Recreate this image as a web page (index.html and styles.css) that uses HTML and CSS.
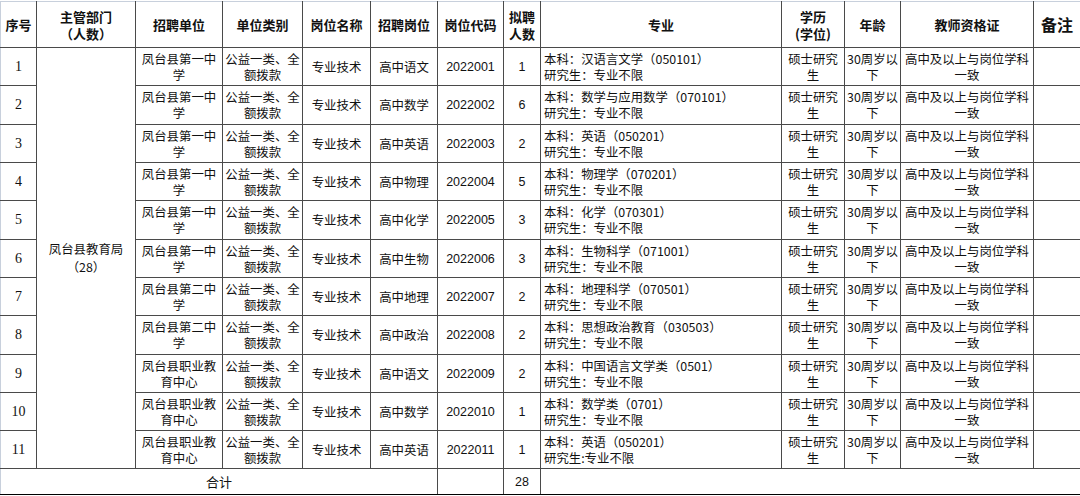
FILE: index.html
```html
<!DOCTYPE html>
<html lang="zh">
<head>
<meta charset="utf-8">
<link rel="stylesheet" href="styles.css">
</head>
<body>
<table class="grid">
  <colgroup>
    <col class="c-no"><col class="c-dept"><col class="c-unit"><col class="c-type"><col class="c-pos"><col class="c-job"><col class="c-code"><col class="c-num"><col class="c-major"><col class="c-edu"><col class="c-age"><col class="c-cert"><col class="c-note">
  </colgroup>
  <thead>
    <tr class="head">
      <th class="first">序号</th>
      <th>主管部门<br>（人数）</th>
      <th>招聘单位</th>
      <th>单位类别</th>
      <th>岗位名称</th>
      <th>招聘岗位</th>
      <th>岗位代码</th>
      <th>拟聘<br>人数</th>
      <th>专业</th>
      <th>学历<br>(学位)</th>
      <th>年龄</th>
      <th>教师资格证</th>
      <th class="last note">备注</th>
    </tr>
  </thead>
  <tbody>
    <tr class="r38">
      <td class="first no">1</td>
      <td class="dept" rowspan="11">凤台县教育局<br>（28）</td>
      <td>凤台县第一中学</td><td>公益一类、全额拨款</td><td>专业技术</td><td>高中语文</td><td class="code">2022001</td><td class="code">1</td>
      <td class="major">本科：汉语言文学（050101）<br>研究生：专业不限</td>
      <td>硕士研究生</td><td>30周岁以下</td><td>高中及以上与岗位学科一致</td><td class="last"></td>
    </tr>
    <tr class="r39">
      <td class="first no">2</td>
      <td>凤台县第一中学</td><td>公益一类、全额拨款</td><td>专业技术</td><td>高中数学</td><td class="code">2022002</td><td class="code">6</td>
      <td class="major">本科：数学与应用数学（070101）<br>研究生：专业不限</td>
      <td>硕士研究生</td><td>30周岁以下</td><td>高中及以上与岗位学科一致</td><td class="last"></td>
    </tr>
    <tr class="r38">
      <td class="first no">3</td>
      <td>凤台县第一中学</td><td>公益一类、全额拨款</td><td>专业技术</td><td>高中英语</td><td class="code">2022003</td><td class="code">2</td>
      <td class="major">本科：英语（050201）<br>研究生：专业不限</td>
      <td>硕士研究生</td><td>30周岁以下</td><td>高中及以上与岗位学科一致</td><td class="last"></td>
    </tr>
    <tr class="r38">
      <td class="first no">4</td>
      <td>凤台县第一中学</td><td>公益一类、全额拨款</td><td>专业技术</td><td>高中物理</td><td class="code">2022004</td><td class="code">5</td>
      <td class="major">本科：物理学（070201）<br>研究生：专业不限</td>
      <td>硕士研究生</td><td>30周岁以下</td><td>高中及以上与岗位学科一致</td><td class="last"></td>
    </tr>
    <tr class="r39">
      <td class="first no">5</td>
      <td>凤台县第一中学</td><td>公益一类、全额拨款</td><td>专业技术</td><td>高中化学</td><td class="code">2022005</td><td class="code">3</td>
      <td class="major">本科：化学（070301）<br>研究生：专业不限</td>
      <td>硕士研究生</td><td>30周岁以下</td><td>高中及以上与岗位学科一致</td><td class="last"></td>
    </tr>
    <tr class="r38">
      <td class="first no">6</td>
      <td>凤台县第一中学</td><td>公益一类、全额拨款</td><td>专业技术</td><td>高中生物</td><td class="code">2022006</td><td class="code">3</td>
      <td class="major">本科：生物科学（071001）<br>研究生：专业不限</td>
      <td>硕士研究生</td><td>30周岁以下</td><td>高中及以上与岗位学科一致</td><td class="last"></td>
    </tr>
    <tr class="r38">
      <td class="first no">7</td>
      <td>凤台县第二中学</td><td>公益一类、全额拨款</td><td>专业技术</td><td>高中地理</td><td class="code">2022007</td><td class="code">2</td>
      <td class="major">本科：地理科学（070501）<br>研究生：专业不限</td>
      <td>硕士研究生</td><td>30周岁以下</td><td>高中及以上与岗位学科一致</td><td class="last"></td>
    </tr>
    <tr class="r39">
      <td class="first no">8</td>
      <td>凤台县第二中学</td><td>公益一类、全额拨款</td><td>专业技术</td><td>高中政治</td><td class="code">2022008</td><td class="code">2</td>
      <td class="major">本科：思想政治教育（030503）<br>研究生：专业不限</td>
      <td>硕士研究生</td><td>30周岁以下</td><td>高中及以上与岗位学科一致</td><td class="last"></td>
    </tr>
    <tr class="r38">
      <td class="first no">9</td>
      <td>凤台县职业教育中心</td><td>公益一类、全额拨款</td><td>专业技术</td><td>高中语文</td><td class="code">2022009</td><td class="code">2</td>
      <td class="major">本科：中国语言文学类（0501）<br>研究生：专业不限</td>
      <td>硕士研究生</td><td>30周岁以下</td><td>高中及以上与岗位学科一致</td><td class="last"></td>
    </tr>
    <tr class="r38">
      <td class="first no">10</td>
      <td>凤台县职业教育中心</td><td>公益一类、全额拨款</td><td>专业技术</td><td>高中数学</td><td class="code">2022010</td><td class="code">1</td>
      <td class="major">本科：数学类（0701）<br>研究生：专业不限</td>
      <td>硕士研究生</td><td>30周岁以下</td><td>高中及以上与岗位学科一致</td><td class="last"></td>
    </tr>
    <tr class="r38">
      <td class="first no">11</td>
      <td>凤台县职业教育中心</td><td>公益一类、全额拨款</td><td>专业技术</td><td>高中英语</td><td class="code">2022011</td><td class="code">1</td>
      <td class="major">本科：英语（050201）<br>研究生:专业不限</td>
      <td>硕士研究生</td><td>30周岁以下</td><td>高中及以上与岗位学科一致</td><td class="last"></td>
    </tr>
    <tr class="total">
      <td class="first" colspan="6">合计</td>
      <td></td>
      <td class="code">28</td>
      <td class="last" colspan="5"></td>
    </tr>
  </tbody>
</table>
</body>
</html>
```
FILE: styles.css
```css
html, body {
  margin: 0;
  padding: 0;
  background: #ffffff;
}
body {
  padding-top: 1px;
  font-family: "Noto Sans CJK SC", "Noto Sans", sans-serif;
  color: #111;
}
.grid {
  width: 1080px;
  table-layout: fixed;
  border-collapse: collapse;
  font-size: 12.4px;
  line-height: 16px;
}
.c-no { width: 36px; }
.c-dept { width: 99px; }
.c-unit { width: 87px; }
.c-type { width: 80px; }
.c-pos { width: 68px; }
.c-job { width: 67px; }
.c-code { width: 66px; }
.c-num { width: 37px; }
.c-major { width: 241px; }
.c-edu { width: 63px; }
.c-age { width: 56px; }
.c-cert { width: 133px; }
.c-note { width: 47px; }

.grid th, .grid td {
  border: 1px solid #4a4a4a;
  padding: 0 2px;
  text-align: center;
  vertical-align: middle;
  overflow: hidden;
}
.grid th {
  font-weight: 700;
  font-size: 13px;
  line-height: 17px;
  color: #111;
}
.head th { border-top: 1px solid #c8d0dc; height: 45px; }
.grid .first { border-left: 1px solid #c8d0dc; }
.grid .last { border-right: 1px solid #c8d0dc; }
.grid th.note { font-size: 16px; }
.r38 td { height: 37px; }
.r39 td { height: 38px; }
.grid td.no {
  font-family: "Liberation Serif", serif;
  font-size: 14px;
}
.grid td.code {
  font-family: "Liberation Sans", sans-serif;
  font-size: 12.5px;
}
.grid td.major {
  text-align: left;
  padding-left: 3px;
}
.grid td.dept { line-height: 18px; }
.total td {
  height: 25px;
  border-bottom: 1px solid #000;
  font-size: 13px;
}
```
